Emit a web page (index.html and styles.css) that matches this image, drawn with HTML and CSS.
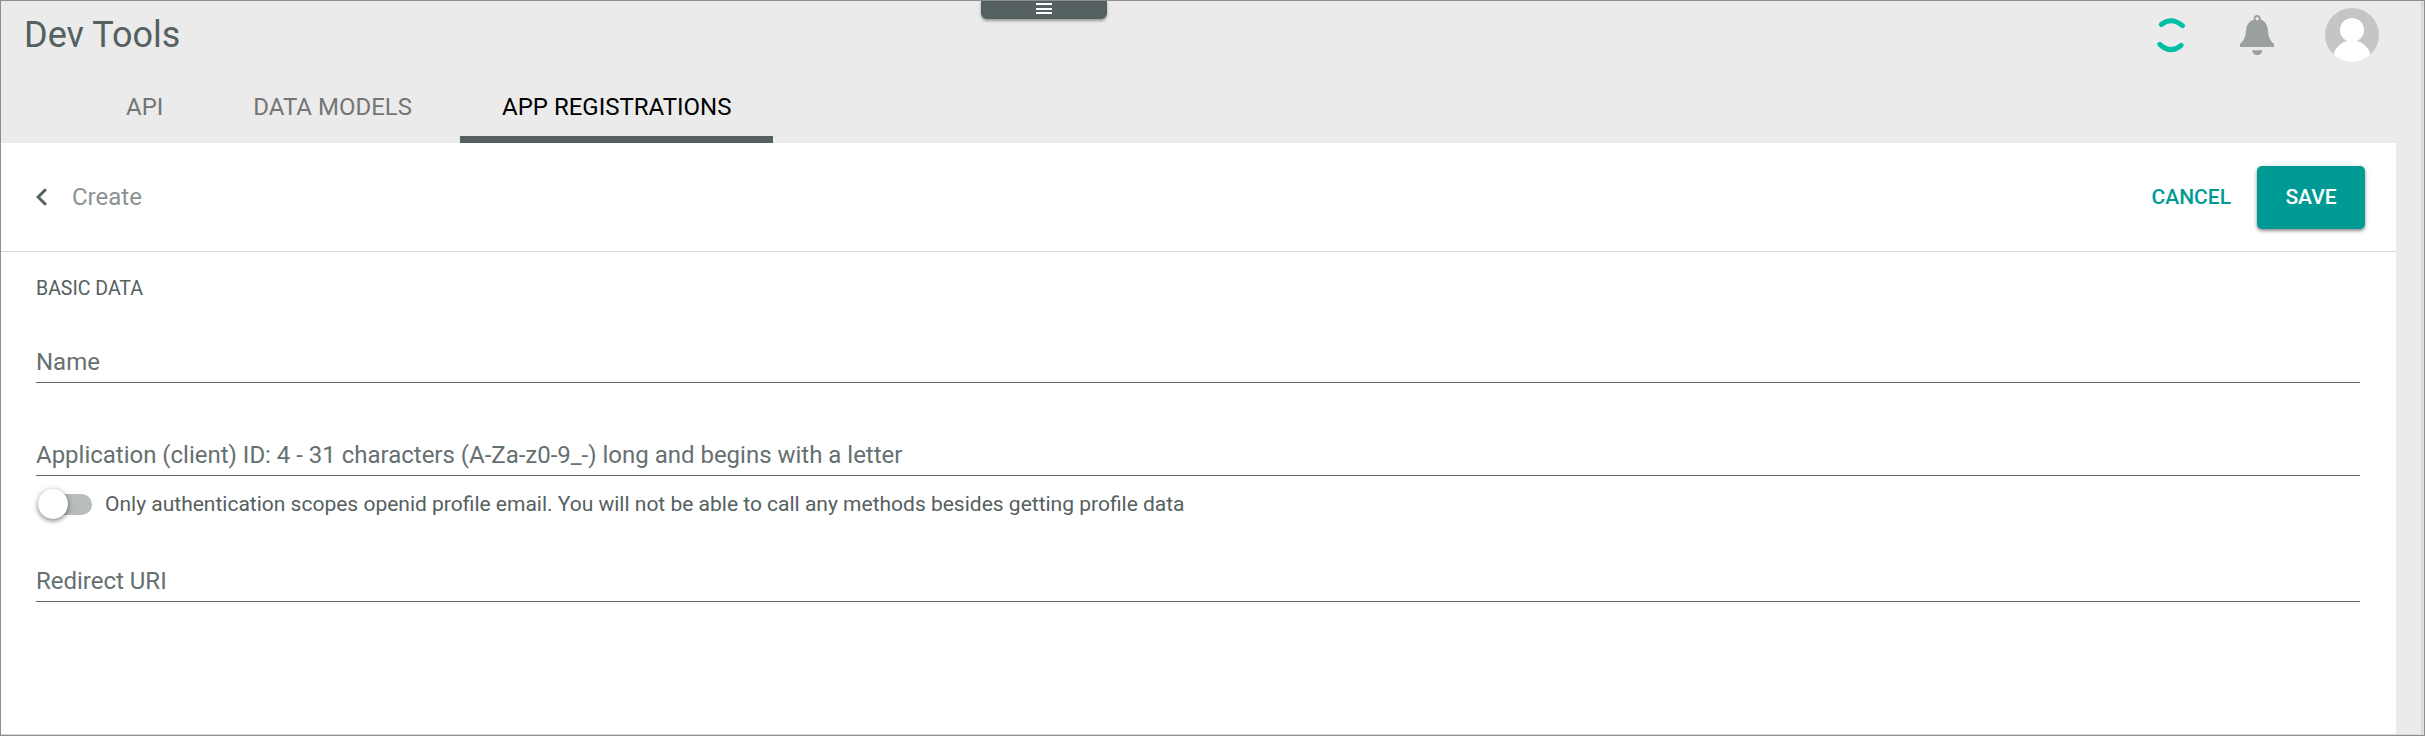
FILE: index.html
```html
<!DOCTYPE html>
<html lang="en">
<head>
<meta charset="utf-8">
<title>Dev Tools</title>
<link rel="stylesheet" href="styles.css">
</head>
<body>
<div class="frame">
  <div class="app">
    <header class="header">
      <div class="topbar">
        <h1 class="title">Dev Tools</h1>
        <div class="tools">
          <svg class="spinner" viewBox="0 0 30 38" fill="none" stroke="#00bfa5" stroke-width="5" stroke-linecap="round"><path d="M6.300 8.500Q16.500.5 27.500 9.700M4.800 28.300Q15.500 38.300 26.200 29.300"/></svg>
          <svg class="bell" viewBox="0 0 34 40" fill="#9aa09f"><path fill-rule="evenodd" d="M17.200 0a3.500 3.500 0 0 1 3.400 4.600C25 6.300 27.100 9.500 27.700 14c.8 6.500 1.500 11.500 6.300 14.700V32H0v-3.300c4.800-3.200 5.500-8.200 6.300-14.700C7 9.500 9.300 6.300 13.800 4.600A3.500 3.500 0 0 1 17.200 0zm0 2a1.700 1.700 0 1 0 0 3.400 1.700 1.700 0 0 0 0-3.400z"/><path d="M12.200 35.200h10c0 2.800-2.200 4.800-5 4.800s-5-2-5-4.800z"/></svg>
          <svg class="avatar" viewBox="0 0 54 54"><defs><clipPath id="disc"><circle cx="27" cy="27" r="27"/></clipPath></defs><g clip-path="url(#disc)"><rect width="54" height="54" fill="#c5c5c5"/><circle cx="27" cy="22" r="12" fill="#fff"/><path fill="#fff" d="M6.500 54C8 41 16 32.300 27 32.300S46 41 47.500 54z"/></g></svg>
        </div>
      </div>
      <nav class="tabs">
        <a class="tab">API</a>
        <a class="tab">DATA MODELS</a>
        <a class="tab tab-active">APP REGISTRATIONS</a>
      </nav>
    </header>
    <main class="panel">
      <div class="panel-bar">
        <svg class="back" viewBox="0 0 12 18" fill="none" stroke="#556060" stroke-width="3"><path d="M9.900 1.200 2.100 9l7.800 7.800"/></svg>
        <span class="crumb">Create</span>
        <button class="cancel">CANCEL</button>
        <button class="save">SAVE</button>
      </div>
      <form class="form">
        <h2 class="section">BASIC DATA</h2>
        <div class="field">Name</div>
        <div class="field field-id">Application (client) ID: 4 - 31 characters (A-Za-z0-9_-) long and begins with a letter</div>
        <label class="switch-row">
          <span class="switch"><span class="thumb"></span></span>
          <span class="switch-text">Only authentication scopes openid profile email. You will not be able to call any methods besides getting profile data</span>
        </label>
        <div class="field field-uri">Redirect URI</div>
      </form>
    </main>
  </div>
  <div class="menu-handle"><i></i><i></i><i></i></div>
</div>
</body>
</html>
```
FILE: styles.css
```css
* { box-sizing: border-box; }
body { margin: 0; font-family: Roboto, "Liberation Sans", sans-serif; color: #556060; }
.frame { position: relative; width: 2425px; height: 736px; border: 1px solid #8f8f8f; background: #d9dfea; padding-right: 2px; overflow: hidden; }
.app { height: 734px; background: #ebebeb; border-right: 1px solid #d5d5d5; border-bottom: 1px solid #d8d8d8; display: flex; flex-direction: column; }
.header { height: 142px; flex: none; }
.topbar { height: 68px; display: flex; justify-content: space-between; align-items: center; padding: 0 42px 0 23px; }
.title { margin: 0; font-size: 36px; line-height: 68px; font-weight: 400; }
.tools { display: flex; align-items: center; }
.spinner { width: 30px; height: 38px; margin-right: 55px; overflow: visible; }
.bell { width: 34px; height: 40px; margin-right: 51px; }
.avatar { width: 54px; height: 54px; }
.tabs { height: 74px; display: flex; gap: 6px; padding-left: 83px; }
.tab { padding: 0 42px; font-size: 24px; line-height: 77px; height: 74px; color: #757575; }
.tab-active { color: #000; border-bottom: 7px solid #556060; }
.panel { flex: 1; width: 2395px; background: #fff; }
.panel-bar { height: 109px; border-bottom: 1px solid #d9d9d9; display: flex; align-items: center; padding: 0 31px 0 35px; }
.back { width: 12px; height: 18px; margin-right: 24px; }
.crumb { flex: 1; font-size: 24px; color: #8b9392; }
button { font: 500 21px/63px Roboto, sans-serif; height: 63px; border: 0; padding: 0; background: none; color: #009a94; }
.cancel { margin-right: 26px; }
.save { width: 108px; border-radius: 5px; background: #009a94; color: #fff; box-shadow: 0 2px 3px rgba(0,0,0,.35), 0 1px 6px rgba(0,0,0,.15); }
.form { padding: 21px 36px 0 35px; }
.section { margin: 0; height: 30px; font-size: 19.5px; font-weight: 400; line-height: 32px; }
.field { height: 48px; margin-top: 32px; border-bottom: 1px solid #5f6a6a; font-size: 24px; line-height: 54px; letter-spacing: -0.01px; color: #657070; }
.field-id { margin-top: 45px; }
.field-uri { margin-top: 35px; }
.switch-row { display: flex; align-items: center; height: 30px; margin: 13px 0 0 2px; }
.switch { display: flex; align-items: center; width: 54px; height: 21px; border-radius: 11px; background: #b8bcbc; margin-right: 13px; }
.thumb { flex: none; width: 30px; height: 30px; border-radius: 50%; background: #fff; box-shadow: 0 2px 4px rgba(0,0,0,.35), 0 1px 7px rgba(0,0,0,.2); }
.switch-text { font-size: 21px; line-height: 30px; }
.menu-handle { position: absolute; left: 980px; top: 0; width: 126px; height: 18px; border-radius: 0 0 6px 6px; background: #556060; box-shadow: 0 2px 3px rgba(0,0,0,.35); display: flex; flex-direction: column; align-items: center; padding-top: 2px; gap: 2.500px; }
.menu-handle i { width: 16px; height: 2px; background: #fff; }
```
